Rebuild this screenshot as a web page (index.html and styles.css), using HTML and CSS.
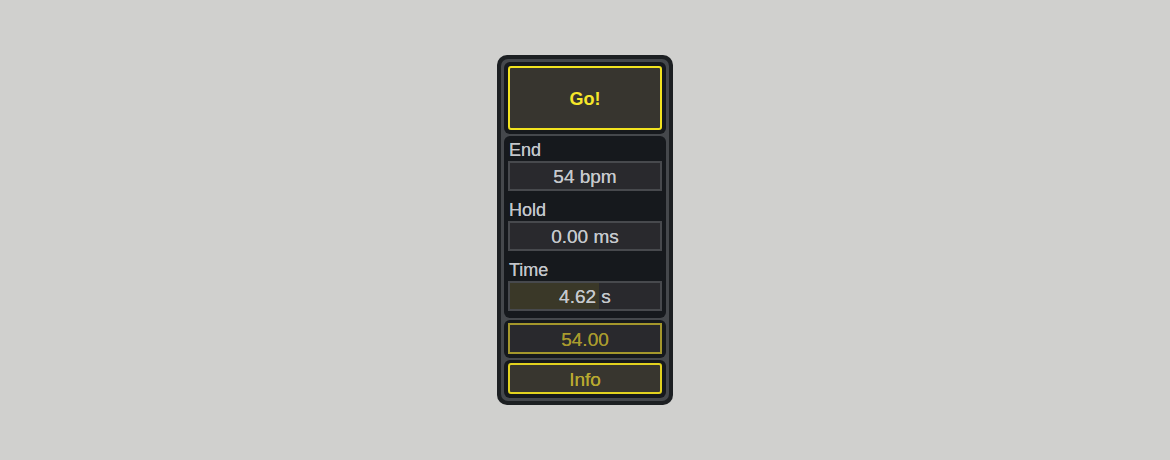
FILE: index.html
```html
<!DOCTYPE html>
<html>
<head>
<meta charset="utf-8">
<link rel="stylesheet" href="styles.css">
</head>
<body>
<div class="stage">
  <div class="panel">
    <div class="frame">
      <div class="section sec-go">
        <div class="go-btn">Go!</div>
      </div>
      <div class="section sec-params">
        <div class="param">
          <div class="label">End</div>
          <div class="value">54 bpm</div>
        </div>
        <div class="param">
          <div class="label">Hold</div>
          <div class="value">0.00 ms</div>
        </div>
        <div class="param">
          <div class="label">Time</div>
          <div class="value value-fill"><div class="fill" style="width:59%"></div><span class="value-text">4.62 s</span></div>
        </div>
      </div>
      <div class="section sec-small">
        <div class="readout">54.00</div>
      </div>
      <div class="section sec-small">
        <div class="info-btn">Info</div>
      </div>
    </div>
  </div>
</div>
</body>
</html>
```
FILE: styles.css
```css
html, body {
  margin: 0;
  padding: 0;
  background: #d0d0ce;
  font-family: "Liberation Sans", Arial, sans-serif;
}
.stage {
  width: 1170px;
  height: 460px;
  display: flex;
  justify-content: center;
  align-items: flex-start;
  padding-top: 55px;
  box-sizing: border-box;
}
.panel {
  width: 176px;
  height: 350px;
  box-sizing: border-box;
  background: #1c1f22;
  border-radius: 10px;
  padding: 4px;
}
.frame {
  height: 100%;
  box-sizing: border-box;
  background: #45484c;
  border-radius: 7px;
  padding: 3px;
  display: flex;
  flex-direction: column;
  gap: 2px;
}
.section {
  background: #16191d;
  border-radius: 6px;
  padding: 4px;
}
.sec-go {
  height: 72px;
  box-sizing: border-box;
}
.go-btn {
  height: 64px;
  box-sizing: border-box;
  border: 2px solid #f2e31f;
  border-radius: 3px;
  background: #37352f;
  color: #f6e72a;
  font-weight: bold;
  font-size: 18px;
  padding-top: 2px;
  display: flex;
  align-items: center;
  justify-content: center;
}
.sec-params {
  height: 182px;
  box-sizing: border-box;
  padding: 4px 4px 7px;
  display: flex;
  flex-direction: column;
  gap: 9px;
}
.label {
  height: 21px;
  color: #c3c6cb;
  font-size: 18px;
  line-height: 21px;
  padding-left: 1px;
  text-shadow: 0 0 0.4px #c3c6cb;
}
.value {
  height: 30px;
  box-sizing: border-box;
  border: 2px solid #47494d;
  background: #29292d;
  color: #c6c9cd;
  font-size: 19px;
  padding-top: 2px;
  display: flex;
  align-items: center;
  justify-content: center;
  text-shadow: 0 0 0.4px #c6c9cd;
}
.value-fill {
  position: relative;
}
.fill {
  position: absolute;
  left: 0;
  top: 0;
  bottom: 0;
  background: #3a3828;
}
.value-text {
  position: relative;
}
.sec-small {
  height: 38px;
  box-sizing: border-box;
  padding: 3px 4px 4px;
}
.readout {
  height: 31px;
  box-sizing: border-box;
  border: 2px solid #a4972c;
  background: #29292d;
  color: #a99b2e;
  font-size: 19px;
  padding-top: 2px;
  display: flex;
  align-items: center;
  justify-content: center;
  text-shadow: 0 0 0.4px #a99b2e;
}
.info-btn {
  height: 31px;
  box-sizing: border-box;
  border: 2px solid #e2d21f;
  border-radius: 3px;
  background: #38362f;
  color: #b9aa30;
  font-size: 19px;
  padding-top: 2px;
  display: flex;
  align-items: center;
  justify-content: center;
  text-shadow: 0 0 0.5px #b9aa30;
}
```
